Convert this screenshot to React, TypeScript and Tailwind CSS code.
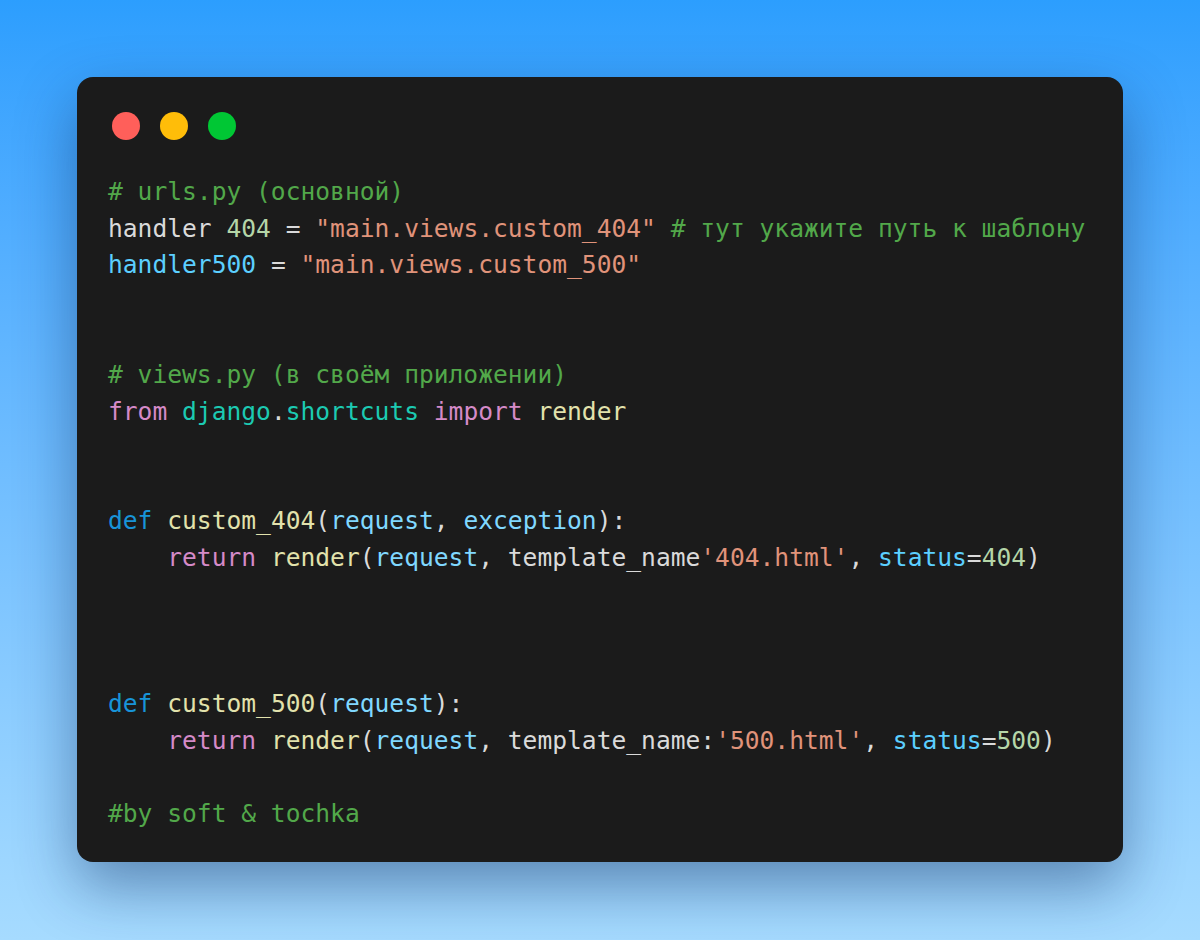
import React from 'react';

type Tok = [string, string];

const C = {
  com: 'text-[#52a84a]',
  txt: 'text-[#dadada]',
  num: 'text-[#b5d6a8]',
  str: 'text-[#e0937a]',
  cst: 'text-[#5ccfff]',
  kw: 'text-[#d58ac8]',
  mod: 'text-[#1ccab2]',
  fn: 'text-[#e2e2ac]',
  def: 'text-[#1894d8]',
  var: 'text-[#80d8ff]',
};

const lines: Tok[][] = [
  [[C.com, '# urls.py (основной)']],
  [
    [C.txt, 'handler '],
    [C.num, '404'],
    [C.txt, ' = '],
    [C.str, '"main.views.custom_404"'],
    [C.com, ' # тут укажите путь к шаблону'],
  ],
  [
    [C.cst, 'handler500'],
    [C.txt, ' = '],
    [C.str, '"main.views.custom_500"'],
  ],
  [],
  [],
  [[C.com, '# views.py (в своём приложении)']],
  [
    [C.kw, 'from'],
    [C.txt, ' '],
    [C.mod, 'django'],
    [C.txt, '.'],
    [C.mod, 'shortcuts'],
    [C.txt, ' '],
    [C.kw, 'import'],
    [C.txt, ' '],
    [C.fn, 'render'],
  ],
  [],
  [],
  [
    [C.def, 'def'],
    [C.txt, ' '],
    [C.fn, 'custom_404'],
    [C.txt, '('],
    [C.var, 'request'],
    [C.txt, ', '],
    [C.var, 'exception'],
    [C.txt, '):'],
  ],
  [
    [C.txt, '    '],
    [C.kw, 'return'],
    [C.txt, ' '],
    [C.fn, 'render'],
    [C.txt, '('],
    [C.var, 'request'],
    [C.txt, ', template_name'],
    [C.str, "'404.html'"],
    [C.txt, ', '],
    [C.cst, 'status'],
    [C.txt, '='],
    [C.num, '404'],
    [C.txt, ')'],
  ],
  [],
  [],
  [],
  [
    [C.def, 'def'],
    [C.txt, ' '],
    [C.fn, 'custom_500'],
    [C.txt, '('],
    [C.var, 'request'],
    [C.txt, '):'],
  ],
  [
    [C.txt, '    '],
    [C.kw, 'return'],
    [C.txt, ' '],
    [C.fn, 'render'],
    [C.txt, '('],
    [C.var, 'request'],
    [C.txt, ', template_name:'],
    [C.str, "'500.html'"],
    [C.txt, ', '],
    [C.cst, 'status'],
    [C.txt, '='],
    [C.num, '500'],
    [C.txt, ')'],
  ],
  [],
  [[C.com, '#by soft & tochka']],
];

export default function App() {
  return (
    <div className="w-[1200px] h-[940px] bg-gradient-to-b from-[#2c9efe] to-[#a6dbff] pt-[77px] pl-[77px]">
      <div className="w-[1046px] h-[785px] bg-[#1b1b1b] rounded-[16px] shadow-[0_24px_60px_rgba(10,40,90,0.45)] pt-[35px] pl-[35px]">
        {/* window buttons */}
        <div className="flex items-center gap-[20px]">
          <span className="w-[28px] h-[28px] rounded-full bg-[#ff5f5a]" />
          <span className="w-[28px] h-[28px] rounded-full bg-[#ffbd09]" />
          <span className="w-[28px] h-[28px] rounded-full bg-[#00c734]" />
        </div>

        <pre className="mt-[34px] -ml-[4px] font-['DejaVu_Sans_Mono','Liberation_Mono',monospace] text-[24.6px] leading-[36.6px]">
          {lines.map((line, i) => (
            <div key={i} className="h-[36.6px]">
              {line.map(([cls, t], j) => (
                <span key={j} className={cls}>
                  {t}
                </span>
              ))}
            </div>
          ))}
        </pre>
      </div>
    </div>
  );
}
